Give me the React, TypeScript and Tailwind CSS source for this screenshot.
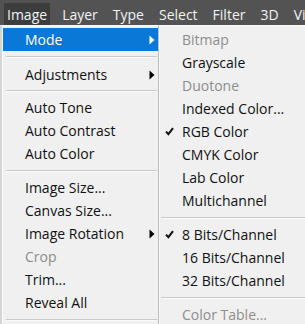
import React from "react";

// Photoshop-style "Image" menu, open on Mode.

type Item =
  | { kind: "item"; label: string; disabled?: boolean; sub?: boolean; active?: boolean; checked?: boolean }
  | { kind: "sep"; h?: string };

const MENUBAR = ["Image", "Layer", "Type", "Select", "Filter", "3D", "View"];

const MAIN: Item[] = [
  { kind: "item", label: "Mode", sub: true, active: true },
  { kind: "sep", h: "h-[12px]" },
  { kind: "item", label: "Adjustments", sub: true },
  { kind: "sep", h: "h-[10px]" },
  { kind: "item", label: "Auto Tone" },
  { kind: "item", label: "Auto Contrast" },
  { kind: "item", label: "Auto Color" },
  { kind: "sep" },
  { kind: "item", label: "Image Size..." },
  { kind: "item", label: "Canvas Size..." },
  { kind: "item", label: "Image Rotation", sub: true },
  { kind: "item", label: "Crop", disabled: true },
  { kind: "item", label: "Trim..." },
  { kind: "item", label: "Reveal All" },
  { kind: "sep" },
];

const MODE: Item[] = [
  { kind: "item", label: "Bitmap", disabled: true },
  { kind: "item", label: "Grayscale" },
  { kind: "item", label: "Duotone", disabled: true },
  { kind: "item", label: "Indexed Color..." },
  { kind: "item", label: "RGB Color", checked: true },
  { kind: "item", label: "CMYK Color" },
  { kind: "item", label: "Lab Color" },
  { kind: "item", label: "Multichannel" },
  { kind: "sep" },
  { kind: "item", label: "8 Bits/Channel", checked: true },
  { kind: "item", label: "16 Bits/Channel" },
  { kind: "item", label: "32 Bits/Channel" },
  { kind: "sep" },
  { kind: "item", label: "Color Table...", disabled: true },
];

function Arrow({ white }: { white?: boolean }) {
  return (
    <svg width="6" height="10" viewBox="0 0 6 10" className="shrink-0">
      <path d="M0.5 0.5 L5.5 5 L0.5 9.5 Z" fill={white ? "#ffffff" : "#000000"} />
    </svg>
  );
}

function Check() {
  return (
    <svg width="9" height="9" viewBox="0 0 9 9" className="shrink-0">
      <path d="M1 4.6 L3.4 7.2 L8 1.2" fill="none" stroke="#111" strokeWidth="2" />
    </svg>
  );
}

function Separator({ h = "h-[11px]", sub }: { h?: string; sub?: boolean }) {
  return (
    <div className={`${h} flex flex-col justify-center ${sub ? "pl-[1px]" : "pl-[3px] pr-[1px]"}`}>
      <div className="h-px bg-[#c9c9c9]" />
      <div className="h-px bg-[#fbfbfb]" />
    </div>
  );
}

export default function App() {
  return (
    <div
      className="w-[305px] h-[324px] overflow-hidden bg-[#f0f0f0] text-[14px]"
      style={{ fontFamily: '"Open Sans", "Noto Sans", sans-serif' }}
    >
      {/* Menu bar */}
      <div className="h-[25px] bg-[#535353] flex items-end pl-[4px] text-[#f2f2f2] text-[14px] whitespace-nowrap">
        {MENUBAR.map((m, i) => (
          <div
            key={m}
            className={`h-[22px] flex items-center px-[3px] mr-[9px] ${i === 0 ? "bg-[#3d3d3d]" : ""}`}
          >
            {m}
          </div>
        ))}
      </div>

      <div className="flex">
        {/* Image menu */}
        <div className="w-[159px] h-[299px] shrink-0 border-l-2 border-l-[#d5d5d5] border-r border-r-[#bdbdbd] border-t border-t-[#fafafa] bg-[#f0f0f0] pt-[2px]">
          <div className="border-l border-l-[#fbfbfb] h-full">
            {MAIN.map((it, i) =>
              it.kind === "sep" ? (
                <Separator key={i} h={it.h} />
              ) : (
                <div
                  key={i}
                  className={`h-[23px] flex items-center pl-[22px] pr-[3px] ${
                    it.active ? "bg-[#0a78d7] text-white" : it.disabled ? "text-[#8d8d8d]" : "text-[#111]"
                  }`}
                >
                  <span className="flex-1 leading-none">{it.label}</span>
                  {it.sub && <Arrow white={it.active} />}
                </div>
              )
            )}
          </div>
        </div>

        {/* Mode submenu */}
        <div className="flex-1 h-[299px] border-t border-t-[#fafafa] border-l border-l-[#f7f7f7] bg-[#f0f0f0] pt-[2px]">
          {MODE.map((it, i) =>
            it.kind === "sep" ? (
              <Separator key={i} sub />
            ) : (
              <div
                key={i}
                className={`h-[23px] flex items-center ${it.disabled ? "text-[#8d8d8d]" : "text-[#111]"}`}
              >
                <div className="w-[22px] flex justify-end pr-[8px]">{it.checked && <Check />}</div>
                <span className="leading-none whitespace-nowrap">{it.label}</span>
              </div>
            )
          )}
        </div>
      </div>
    </div>
  );
}
